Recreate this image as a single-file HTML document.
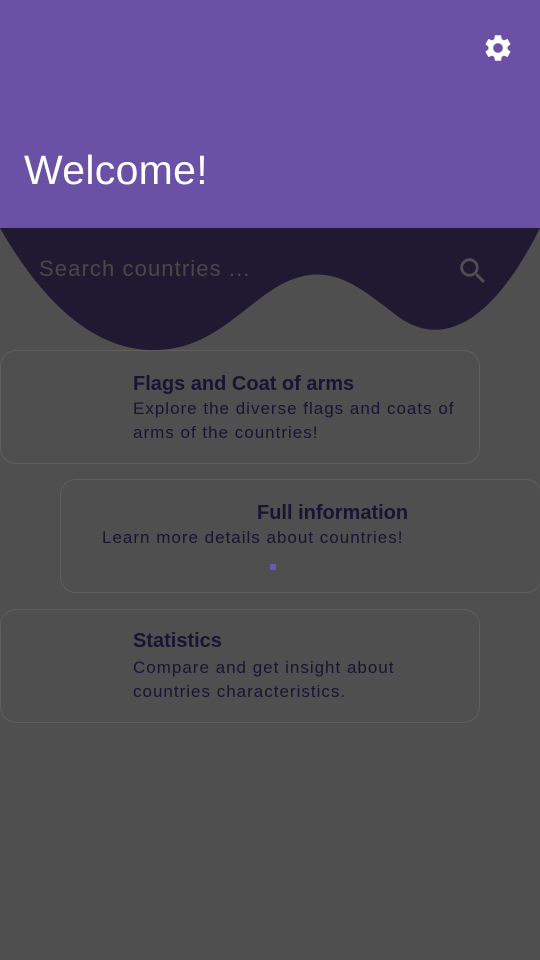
<!DOCTYPE html>
<html><head><meta charset="utf-8"><style>
body{margin:0;width:540px;height:960px;background:#4f4f4f;font-family:"Liberation Sans",Roboto,sans-serif;position:relative;overflow:hidden}
.hdr{position:absolute;left:0;top:0;width:540px;height:228px;background:#6a51a6}
.hdr h1{position:absolute;left:24px;top:147px;margin:0;font-weight:400;font-size:41px;letter-spacing:.3px;color:#fff}
.card{position:absolute;border:1.5px solid #5e5e5e;border-radius:16px;box-sizing:border-box;color:#1a1334}
.t{position:absolute;font-size:20px;font-weight:bold;letter-spacing:0}
.d{position:absolute;font-size:17px;line-height:24px;letter-spacing:1px}
</style></head><body>
<div class="hdr"><h1>Welcome!</h1>
<svg style="position:absolute;left:482px;top:32px" width="32" height="32" viewBox="0 0 24 24"><path fill="#fff" d="M19.14 12.94c.04-.3.06-.61.06-.94 0-.32-.02-.64-.07-.94l2.030-1.58a.49.49 0 0 0 .12-.61l-1.92-3.32a.49.49 0 0 0-.59-.22l-2.39.96c-.5-.38-1.030-.7-1.62-.94l-.36-2.54a.48.48 0 0 0-.48-.41h-3.840c-.24 0-.43.17-.47.41l-.36 2.54c-.59.24-1.13.57-1.62.94l-2.39-.96a.49.49 0 0 0-.59.22L2.74 8.87c-.12.21-.08.47.12.61l2.03 1.58c-.05.3-.09.63-.09.94s.02.64.07.94l-2.03 1.58a.49.49 0 0 0-.12.61l1.92 3.32c.12.22.37.29.59.22l2.39-.96c.5.38 1.03.7 1.62.94l.36 2.54c.05.24.24.41.48.41h3.84c.24 0 .44-.17.47-.41l.36-2.54c.59-.24 1.13-.56 1.62-.94l2.39.96c.22.08.47 0 .59-.22l1.92-3.32c.12-.22.07-.47-.12-.61l-2.01-1.58zM12 15.6c-1.98 0-3.6-1.62-3.6-3.6s1.62-3.6 3.6-3.6 3.6 1.62 3.6 3.6-1.62 3.6-3.6 3.6z"/></svg>
</div>
<svg style="position:absolute;left:0;top:228px" width="540" height="130" viewBox="0 0 540 130"><path fill="#1f1a31" d="M0 0 C40 70 90 120 150 122 C210 124 240 80 280 57 C330 30 360 60 400 90 C460 130 510 60 540 0 Z"/></svg>
<div style="position:absolute;left:39px;top:256px;font-size:22px;color:#484848;letter-spacing:1.1px">Search countries ...</div>
<svg style="position:absolute;left:456px;top:254px" width="34" height="34" viewBox="0 0 24 24"><path fill="#4f4f4f" d="M15.5 14h-.79l-.28-.27A6.47 6.47 0 0 0 16 9.5 6.5 6.5 0 1 0 9.5 16c1.61 0 3.09-.59 4.230-1.57l.27.28v.79l5 4.99L20.49 19l-4.99-5zm-6 0C7.01 14 5 11.99 5 9.5S7.01 5 9.5 5 14 7.01 14 9.5 11.99 14 9.5 14z"/></svg>
<div class="card" style="left:0;top:350px;width:480px;height:114px">
<div class="t" style="left:132px;top:22px">Flags and Coat of arms</div>
<div class="d" style="left:132px;top:46px">Explore the diverse flags and coats of<br>arms of the countries!</div></div>
<div class="card" style="left:60px;top:479px;width:482px;height:114px">
<div class="t" style="left:196px;top:22px">Full information</div>
<div class="d" style="left:41px;top:46px">Learn more details about countries!</div>
<div style="position:absolute;left:209px;top:84px;width:6px;height:6px;background:#6c55b8"></div></div>
<div class="card" style="left:0;top:609px;width:480px;height:114px">
<div class="t" style="left:132px;top:20px">Statistics</div>
<div class="d" style="left:132px;top:46px">Compare and get insight about<br>countries characteristics.</div></div>
</body></html>
